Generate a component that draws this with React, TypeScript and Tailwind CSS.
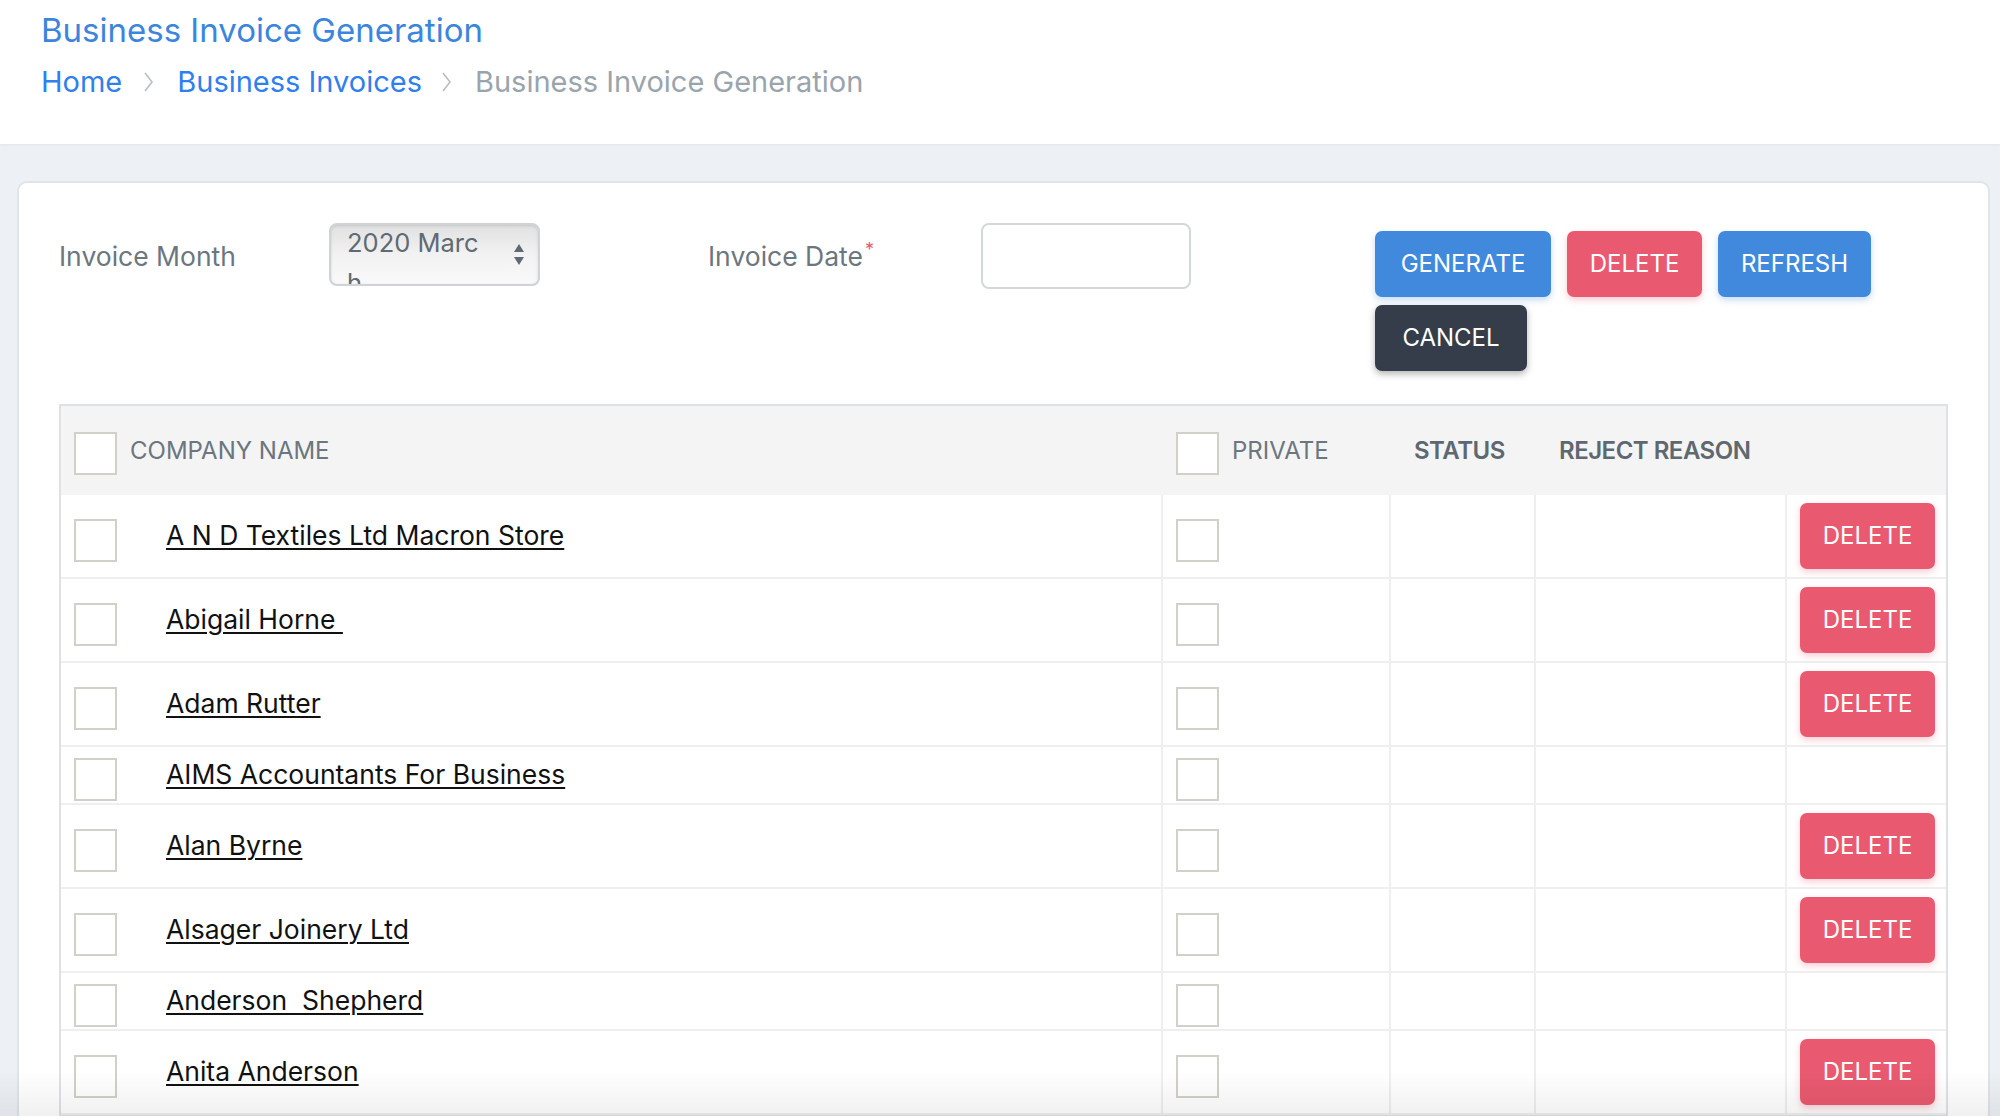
import React from "react";

const rows = [
  { name: "A N D Textiles Ltd Macron Store", del: true },
  { name: "Abigail Horne\u00a0", del: true },
  { name: "Adam Rutter", del: true },
  { name: "AIMS Accountants For Business", del: false },
  { name: "Alan Byrne", del: true },
  { name: "Alsager Joinery Ltd", del: true },
  { name: "Anderson\u00a0 Shepherd", del: false },
  { name: "Anita Anderson", del: true },
];

function Chevron() {
  return (
    <svg width="11" height="22" viewBox="0 0 11 22" className="shrink-0">
      <polyline points="2,2 9,11 2,20" fill="none" stroke="#b7bec4" strokeWidth="1.6" />
    </svg>
  );
}

function Box({ className = "" }: { className?: string }) {
  return <div className={"w-[43px] h-[43px] shrink-0 border-2 border-[#d3cfc9] bg-white " + className} />;
}

export default function App() {
  return (
    <div className="min-h-screen bg-[#edf1f5] font-['Inter',sans-serif] overflow-hidden">
      {/* Header */}
      <div className="h-[144px] bg-white pl-[41px] pt-[10px] shadow-[0_1px_3px_rgba(0,0,0,0.05)]">
        <div className="text-[33px] leading-[40px] text-[#3b86dc]">Business Invoice Generation</div>
        <div className="mt-[14px] flex items-center text-[29px] leading-[36px]">
          <span className="text-[#2f80ed]">Home</span>
          <span className="ml-[21px] mr-[23px]"><Chevron /></span>
          <span className="text-[#2f80ed]">Business Invoices</span>
          <span className="ml-[19px] mr-[23px]"><Chevron /></span>
          <span className="text-[#9aa4ac]">Business Invoice Generation</span>
        </div>
      </div>

      {/* Card */}
      <div className="mt-[37px] ml-[17px] mr-[10px] border-2 border-[#dfe4e8] rounded-[10px] bg-white pt-[40px] px-[40px] pb-[40px]">
        {/* Form row */}
        <div className="flex items-start">
          <div className="w-[270px] h-[63px] pt-[4px] flex items-center text-[26.5px] text-[#6b767e]">Invoice Month</div>
          <div className="relative w-[211px] h-[63px] border-2 border-[#cfd3d7] rounded-[8px] overflow-hidden bg-linear-to-b from-[#e1e1e1] via-[#f2f2f2] to-[#f9f9f9] shadow-[inset_0_1px_3px_rgba(0,0,0,0.12)]">
            <div className="pl-[16px] -mt-[2px] text-[25.5px] leading-[40px] text-[#5f6a72]">
              2020 Marc
              <br />h
            </div>
            <svg width="12" height="24" viewBox="0 0 12 24" className="absolute left-[182px] top-[18px]">
              <polygon points="6,1 11,9 1,9" fill="#5f6a72" />
              <polygon points="1,14 11,14 6,22" fill="#5f6a72" />
            </svg>
          </div>
          <div className="ml-[168px] w-[273px] h-[63px] pt-[4px] flex items-center text-[26.5px] text-[#6b767e]">
            <span>Invoice Date</span>
            <span className="self-start mt-[14px] ml-[2px] text-[18px] leading-[18px] text-[#e95a70]">*</span>
          </div>
          <div className="w-[210px] h-[66px] border-2 border-[#d3d8dd] rounded-[8px] bg-white" />
          <div className="ml-[184px] mt-[8px] flex flex-col gap-[8px]">
            <div className="flex gap-[16px]">
              <button className="w-[176px] h-[66px] rounded-[7px] bg-[#4189dd] text-white text-[24px] shadow-[0_3px_7px_rgba(65,137,221,0.3)]">GENERATE</button>
              <button className="w-[135px] h-[66px] rounded-[7px] bg-[#e95a70] text-white text-[24px] shadow-[0_3px_7px_rgba(233,90,112,0.3)]">DELETE</button>
              <button className="w-[153px] h-[66px] rounded-[7px] bg-[#4189dd] text-white text-[24px] shadow-[0_3px_7px_rgba(65,137,221,0.3)]">REFRESH</button>
            </div>
            <div className="flex">
              <button className="w-[152px] h-[66px] rounded-[7px] bg-[#353d4a] text-white text-[24px] shadow-[0_3px_7px_rgba(0,0,0,0.3)]">CANCEL</button>
            </div>
          </div>
        </div>

        {/* Table */}
        <div className="mt-[33px] border-2 border-[#dee2e6]">
          <div className="grid grid-cols-[1100px_228px_145px_251px_1fr] h-[89px] bg-[#f4f4f4] text-[24px]">
            <div className="flex items-center pl-[13px]">
              <Box className="mt-[5px]" />
              <span className="ml-[13px] text-[#6b767e]">COMPANY NAME</span>
            </div>
            <div className="flex items-center pl-[15px]">
              <Box className="mt-[5px]" />
              <span className="ml-[13px] text-[#6b767e]">PRIVATE</span>
            </div>
            <div className="flex items-center pl-[25px]">
              <span className="font-semibold text-[#5e6870] tracking-[-0.5px]">STATUS</span>
            </div>
            <div className="flex items-center pl-[25px]">
              <span className="font-semibold text-[#5e6870] tracking-[-0.5px]">REJECT REASON</span>
            </div>
            <div />
          </div>
          {rows.map((r, i) => (
            <div
              key={i}
              className={
                "grid grid-cols-[1100px_228px_145px_251px_1fr] border-b-2 border-[#efefef] bg-white " +
                (r.del ? "h-[84px]" : "h-[58px]")
              }
            >
              <div className="flex items-center pl-[13px]">
                <Box className="mt-[8px]" />
                <a className="ml-[49px] text-[26.5px] text-[#111] underline underline-offset-[3px] decoration-[1.5px] whitespace-pre">
                  {r.name}
                </a>
              </div>
              <div className="flex items-center pl-[13px] border-l-2 border-[#efefef]">
                <Box className="mt-[8px]" />
              </div>
              <div className="border-l-2 border-[#efefef]" />
              <div className="border-l-2 border-[#efefef]" />
              <div className="flex items-center pl-[13px] border-l-2 border-[#efefef]">
                {r.del && (
                  <button className="w-[135px] h-[66px] rounded-[7px] bg-[#e95a70] text-white text-[24px] shadow-[0_3px_7px_rgba(233,90,112,0.3)]">
                    DELETE
                  </button>
                )}
              </div>
            </div>
          ))}
        </div>
      </div>

      <div className="pointer-events-none fixed inset-x-0 bottom-0 h-[45px] bg-linear-to-b from-transparent to-[rgba(0,0,0,0.06)]" />
    </div>
  );
}
